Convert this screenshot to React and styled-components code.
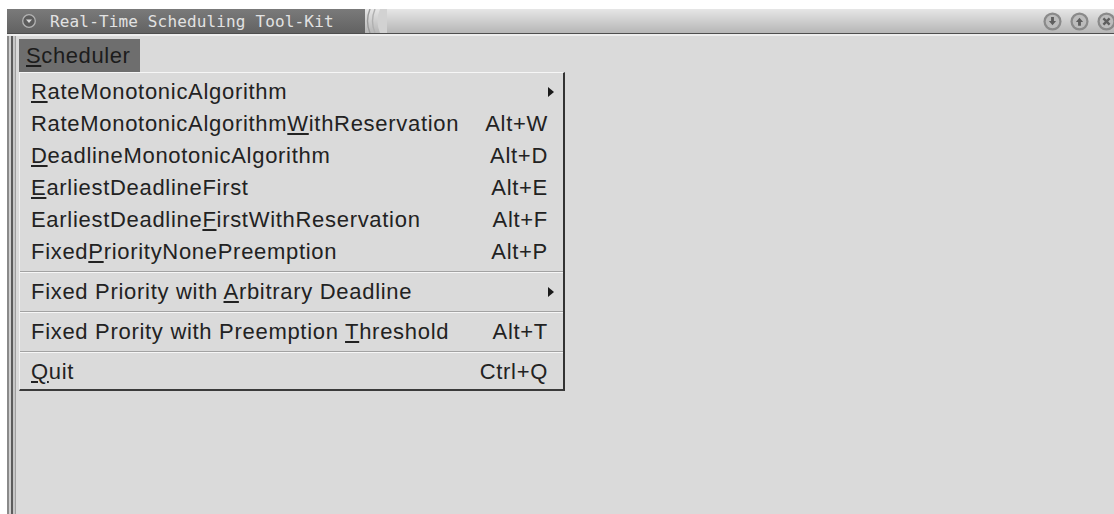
import styled, { createGlobalStyle } from "styled-components";

const GlobalStyle = createGlobalStyle`
  html, body {
    margin: 0;
    background: #ffffff;
    overflow: hidden;
  }
`;

const items = [
  { label: "RateMonotonicAlgorithm", key: 0, submenu: true },
  { label: "RateMonotonicAlgorithmWithReservation", key: 22, shortcut: "Alt+W" },
  { label: "DeadlineMonotonicAlgorithm", key: 0, shortcut: "Alt+D" },
  { label: "EarliestDeadlineFirst", key: 0, shortcut: "Alt+E" },
  { label: "EarliestDeadlineFirstWithReservation", key: 16, shortcut: "Alt+F" },
  { label: "FixedPriorityNonePreemption", key: 5, shortcut: "Alt+P" },
  "sep",
  { label: "Fixed Priority with Arbitrary Deadline", key: 20, submenu: true },
  "sep",
  { label: "Fixed Prority with Preemption Threshold", key: 30, shortcut: "Alt+T" },
  "sep",
  { label: "Quit", key: 0, shortcut: "Ctrl+Q" },
];

const Mnemonic = ({ text, at }) => (
  <>
    {text.slice(0, at)}
    <u>{text[at]}</u>
    {text.slice(at + 1)}
  </>
);

const WindowMenuIcon = () => (
  <svg width="14" height="14" viewBox="0 0 14 14">
    <circle cx="7" cy="7" r="6.3" fill="#5c5c5c" stroke="#b4b4b4" strokeWidth="1.3" />
    <path d="M4 5.5 L10 5.5 L7 9 Z" fill="#d8d8d8" />
  </svg>
);

const Grip = () => (
  <svg width="22" height="24" viewBox="0 0 22 24">
    <path d="M5 0 Q0 12 5 24" fill="none" stroke="#9a9a9a" strokeWidth="1.4" />
    <path d="M10 0 Q5 12 10 24" fill="none" stroke="#b0b0b0" strokeWidth="1.4" />
    <path d="M15 0 Q10 12 15 24 L22 24 L22 0 Z" fill="#d2d2d2" />
  </svg>
);

const TitleButton = ({ kind }) => (
  <svg width="19" height="19" viewBox="0 0 16 16">
    <circle cx="8" cy="8" r="7.6" fill="#8a8a8a" />
    <circle cx="8" cy="8" r="5.7" fill="#bcbcbc" />
    {kind === "down" && (
      <path d="M6.8 4.2 H9.2 V7.6 H11 L8 11.2 L5 7.6 H6.8 Z" fill="#5e5e5e" />
    )}
    {kind === "up" && (
      <path d="M6.8 11.6 H9.2 V8.4 H11 L8 4.8 L5 8.4 H6.8 Z" fill="#5e5e5e" />
    )}
    {kind === "close" && (
      <path d="M5.4 5.4 L10.6 10.6 M10.6 5.4 L5.4 10.6" stroke="#5e5e5e" strokeWidth="2" />
    )}
  </svg>
);

export default function App() {
  return (
    <>
      <GlobalStyle />
      <Window>
        <TitleBar>
          <TitleDark>
            <WindowMenuIcon />
            <TitleText>Real-Time Scheduling Tool-Kit</TitleText>
          </TitleDark>
          <Grip />
          <TitleFill />
          <TitleButtons>
            <TitleButton kind="down" />
            <TitleButton kind="up" />
            <TitleButton kind="close" />
          </TitleButtons>
        </TitleBar>
        <Body>
          <Frame />
          <Content>
            <MenuBar>
              <MenuTitle>
                <Mnemonic text="Scheduler" at={0} />
              </MenuTitle>
            </MenuBar>
            <Popup>
              {items.map((item, i) =>
                item === "sep" ? (
                  <Separator key={i} />
                ) : (
                  <Row key={i}>
                    <Label>
                      <Mnemonic text={item.label} at={item.key} />
                    </Label>
                    {item.shortcut && <Shortcut>{item.shortcut}</Shortcut>}
                    {item.submenu && <Arrow />}
                  </Row>
                )
              )}
            </Popup>
          </Content>
        </Body>
      </Window>
    </>
  );
}

const Window = styled.div`
  margin: 9px 0 0 7px;
  width: 1110px;
  font-family: "Liberation Sans", Arial, sans-serif;
`;

const TitleBar = styled.div`
  height: 24px;
  display: flex;
  align-items: center;
  border-bottom: 1px solid #4e4e4e;
  background: linear-gradient(#e6e6e6, #b6b6b6);
`;

const TitleDark = styled.div`
  height: 100%;
  width: 343px;
  display: flex;
  align-items: center;
  padding-left: 15px;
  gap: 14px;
  background: linear-gradient(#7a7a7a, #626262);
`;

const TitleText = styled.span`
  font-family: "DejaVu Sans Mono", "Liberation Mono", monospace;
  font-size: 16px;
  letter-spacing: 0.15px;
  color: #e2e2e2;
  white-space: nowrap;
`;

const TitleFill = styled.div`
  flex: 1;
  height: 100%;
`;

const TitleButtons = styled.div`
  display: flex;
  gap: 8px;
  padding-right: 1px;
`;

const Body = styled.div`
  display: flex;
  height: 480px;
  background: #dadada;
  border-top: 2px solid #eeeeee;
`;

const Frame = styled.div`
  width: 9px;
  background: linear-gradient(
    to right,
    #8a8a8a 0 2px,
    #cfcfcf 2px 4px,
    #5c5c5c 4px 6px,
    #c6c6c6 6px 8px,
    #a0a0a0 8px 9px
  );
`;

const Content = styled.div`
  flex: 1;
  position: relative;
`;

const MenuBar = styled.div`
  height: 36px;
  padding: 3px 0 0 3px;
  box-sizing: border-box;
  display: flex;
  align-items: flex-start;
`;

const MenuTitle = styled.div`
  height: 33px;
  line-height: 33px;
  padding: 0 10px 0 7px;
  background: #6e6e6e;
  color: #1c1c1c;
  font-size: 22px;
  letter-spacing: 0.6px;

  u {
    text-underline-offset: 2px;
  }
`;

const Popup = styled.div`
  position: absolute;
  left: 3px;
  top: 36px;
  width: 546px;
  box-sizing: border-box;
  padding: 3px 0 1px;
  background: #dadada;
  border-top: 1px solid #f6f6f6;
  border-left: 1px solid #f0f0f0;
  border-right: 2px solid #333333;
  border-bottom: 2px solid #3a3a3a;
`;

const Row = styled.div`
  height: 32px;
  display: flex;
  align-items: center;
  padding: 0 7px 0 11px;
  font-size: 22px;
  letter-spacing: 0.7px;
  color: #222222;
  white-space: nowrap;

  u {
    text-underline-offset: 2px;
  }
`;

const Label = styled.span`
  flex: 1;
`;

const Shortcut = styled.span`
  margin-right: 8px;
`;

const Arrow = styled.span`
  width: 0;
  height: 0;
  border-top: 5px solid transparent;
  border-bottom: 5px solid transparent;
  border-left: 6px solid #1a1a1a;
  margin-right: 2px;
`;

const Separator = styled.div`
  height: 8px;
  display: flex;
  flex-direction: column;
  justify-content: center;

  &::before {
    content: "";
    height: 1px;
    background: #a2a2a2;
  }

  &::after {
    content: "";
    height: 1px;
    background: #f6f6f6;
  }
`;
